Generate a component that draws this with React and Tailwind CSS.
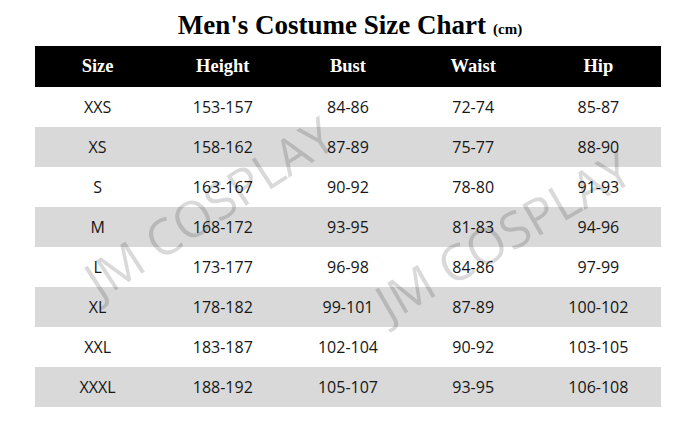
import React from "react";

const rows = [
  ["XXS", "153-157", "84-86", "72-74", "85-87"],
  ["XS", "158-162", "87-89", "75-77", "88-90"],
  ["S", "163-167", "90-92", "78-80", "91-93"],
  ["M", "168-172", "93-95", "81-83", "94-96"],
  ["L", "173-177", "96-98", "84-86", "97-99"],
  ["XL", "178-182", "99-101", "87-89", "100-102"],
  ["XXL", "183-187", "102-104", "90-92", "103-105"],
  ["XXXL", "188-192", "105-107", "93-95", "106-108"],
];

const heads = ["Size", "Height", "Bust", "Waist", "Hip"];

export default function App() {
  return (
    <div className="relative w-[700px] h-[430px] bg-white overflow-hidden">
      <div className="flex items-baseline justify-center pt-[9px] h-[46px] font-['Liberation_Serif',serif] font-bold text-black">
        <span className="text-[27px] leading-[32px]">Men's Costume Size Chart</span>
        <span className="text-[15px] ml-[7px]">(cm)</span>
      </div>
      <div className="mx-[35px] w-[626px]">
        <div className="grid grid-cols-5 h-[41px] bg-black items-center text-white font-['Liberation_Serif',serif] font-bold text-[18.5px] text-center">
          {heads.map((h) => (
            <div key={h}>{h}</div>
          ))}
        </div>
        {rows.map((r, i) => (
          <div
            key={r[0]}
            className={`grid grid-cols-5 h-[40px] items-center text-center text-[16px] text-[#161616] font-['Open_Sans',sans-serif] ${
              i % 2 === 1 ? "bg-[#d9d9d9]" : "bg-white"
            }`}
          >
            {r.map((c, j) => (
              <div key={j}>{c}</div>
            ))}
          </div>
        ))}
      </div>
      <div className="pointer-events-none absolute left-[209px] top-[207px] -translate-x-1/2 -translate-y-1/2 -rotate-[33deg] whitespace-nowrap text-[50px] leading-none font-['Open_Sans',sans-serif] text-black/15">
        JM COSPLAY
      </div>
      <div className="pointer-events-none absolute left-[503px] top-[235px] -translate-x-1/2 -translate-y-1/2 -rotate-[30deg] whitespace-nowrap text-[50px] leading-none font-['Open_Sans',sans-serif] text-black/15">
        JM COSPLAY
      </div>
    </div>
  );
}
